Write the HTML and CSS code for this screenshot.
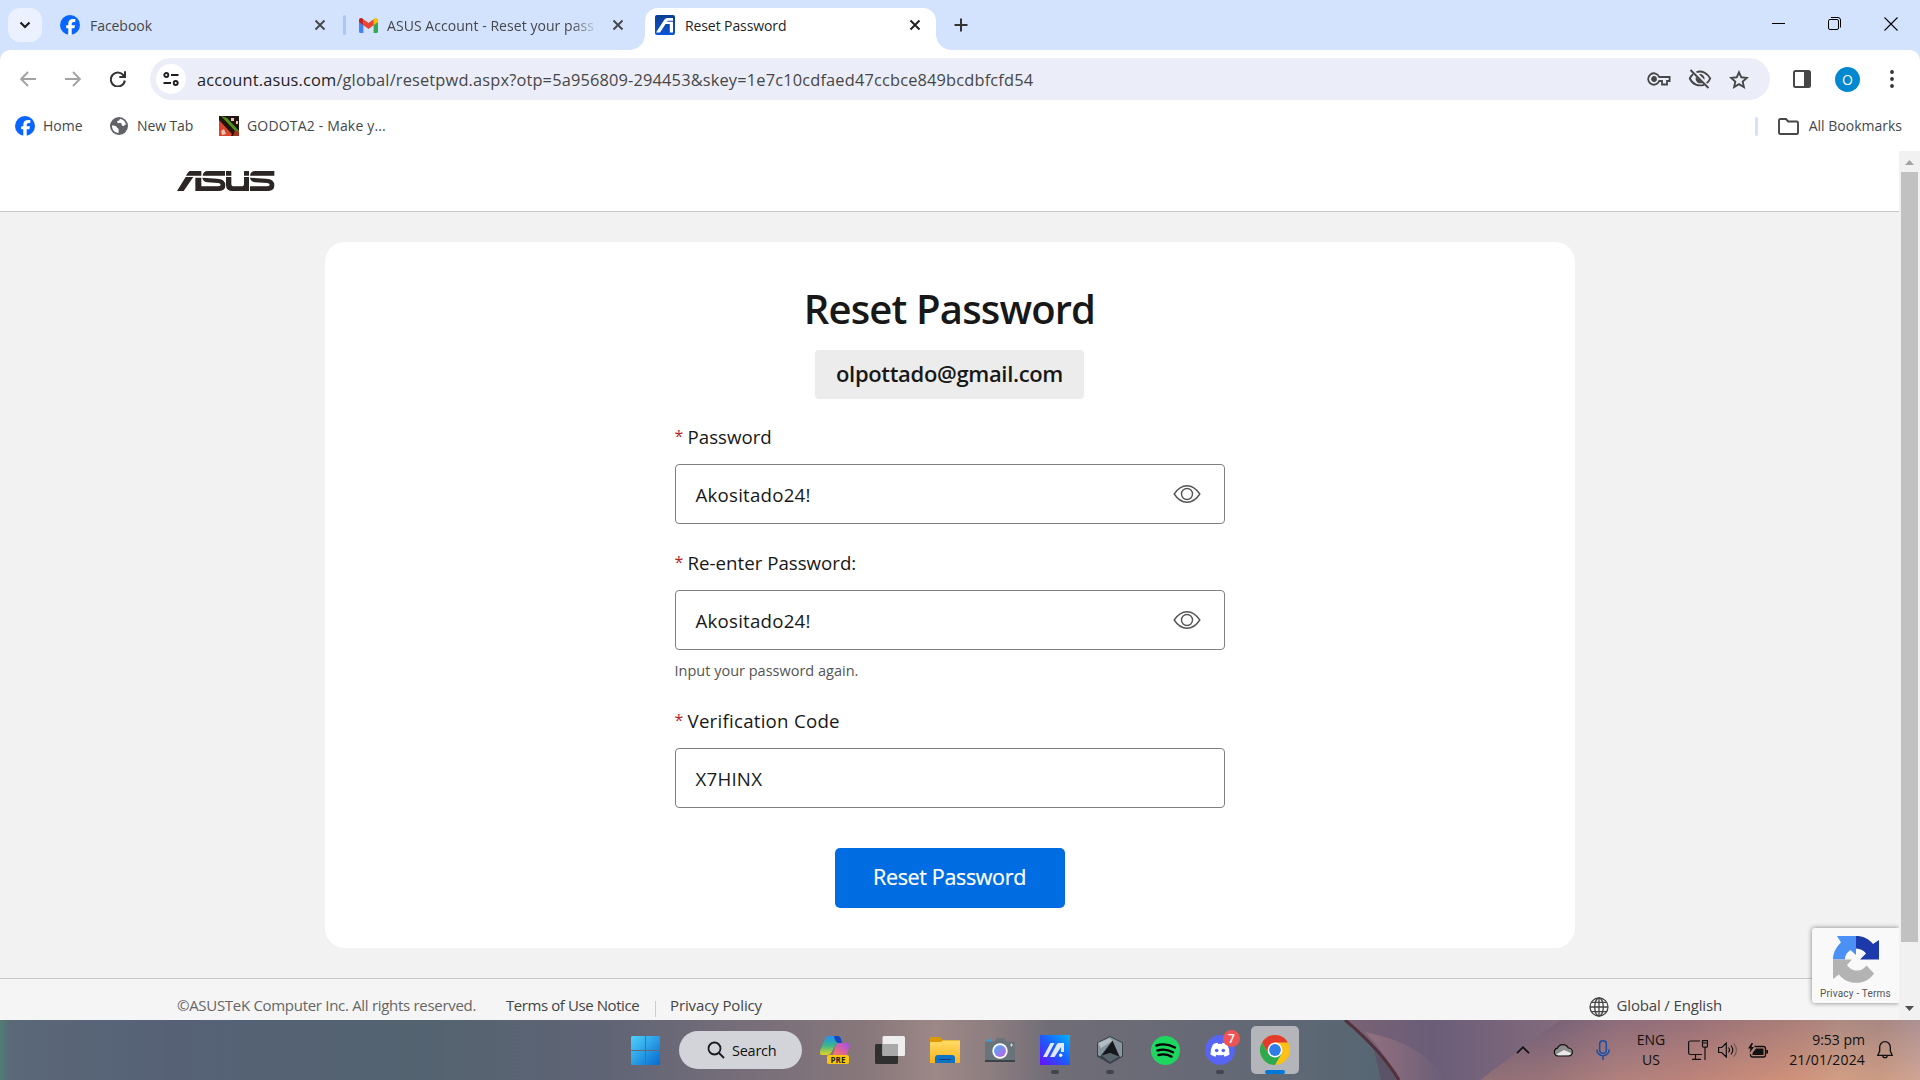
FILE: index.html
```html
<!DOCTYPE html>
<html lang="en">
<head>
<meta charset="utf-8">
<title>Reset Password</title>
<link rel="stylesheet" href="styles.css">
</head>
<body>
<svg width="0" height="0" class="defs" aria-hidden="true">
  <defs>
    <symbol id="fb" viewBox="0 0 20 20"><circle cx="10" cy="10" r="10" fill="#0866ff"/><path d="M8.3 19.9v-6.7H6.2v-3h2.1V8.9c0-3.4 1.5-5 4.9-5 .6 0 1.700.1 2.100.2v2.800h-1.300c-1.700 0-2.300.7-2.300 2.300v1h3.300l-.6 3h-2.700v6.700a10 10 0 0 1-3.400 0z" fill="#fff"/></symbol>
    <symbol id="x" viewBox="0 0 12 12"><path d="M1.500 1.500l9 9M10.500 1.500l-9 9" fill="none" stroke="currentColor" stroke-width="1.900"/></symbol>
    <symbol id="eye" viewBox="0 0 28 20"><path d="M1.200 10C4.500 5 9 1.700 14 1.700S23.500 5 26.800 10C23.500 15 19 18.300 14 18.300S4.500 15 1.200 10z" fill="none" stroke="#555" stroke-width="1.400"/><circle cx="14" cy="10" r="5.500" fill="none" stroke="#555" stroke-width="1.400"/></symbol>
    <linearGradient id="gwin" x1="0" y1="0" x2="1" y2="1"><stop offset="0" stop-color="#4fd2fb"/><stop offset="1" stop-color="#0669cf"/></linearGradient>
    <linearGradient id="gcop" x1="0" y1="0" x2="0" y2="1"><stop offset="0" stop-color="#2193f5"/><stop offset=".5" stop-color="#38b58c"/><stop offset="1" stop-color="#e8d420"/></linearGradient>
    <linearGradient id="gcop2" x1="1" y1="0" x2="0" y2="1"><stop offset="0" stop-color="#a44bf0"/><stop offset="1" stop-color="#ff7a5c"/></linearGradient>
    <linearGradient id="gfold" x1="0" y1="0" x2="0" y2="1"><stop offset="0" stop-color="#ffdb66"/><stop offset="1" stop-color="#fbb41c"/></linearGradient>
    <linearGradient id="glens" x1="0" y1="0" x2="1" y2="1"><stop offset="0" stop-color="#48b4f2"/><stop offset="1" stop-color="#c65ae6"/></linearGradient>
    <linearGradient id="gmy" x1="0" y1="1" x2="1" y2="0"><stop offset="0" stop-color="#6a10ff"/><stop offset=".5" stop-color="#1c5bff"/><stop offset="1" stop-color="#00b4ff"/></linearGradient>
    <linearGradient id="gasus" x1="0" y1="0" x2="0" y2="1"><stop offset="0" stop-color="#0b3d91"/><stop offset="1" stop-color="#0a55d8"/></linearGradient>
  </defs>
</svg>

<header class="tabstrip">
  <div class="tab-search"><svg width="12" height="8" viewBox="0 0 12 8"><path d="M1.500 1.500L6 6l4.500-4.500" fill="none" stroke="#1f1f1f" stroke-width="2.200"/></svg></div>
  <div class="tab">
    <svg class="fav" width="20" height="20"><use href="#fb"/></svg>
    <span class="tab-title">Facebook</span>
    <svg class="tab-x" width="12" height="12"><use href="#x"/></svg>
  </div>
  <div class="tab tab-mail">
    <svg class="fav mail" width="19" height="15" viewBox="0 0 19 15"><path d="M0 2v11.500c0 .8.6 1.500 1.400 1.500h3V6.500z" fill="#4285f4"/><path d="M19 2v11.500c0 .8-.6 1.500-1.400 1.500h-3V6.500z" fill="#34a853"/><path d="M14.600 1.200v6L19 4V2c0-1.900-2-2.500-3.400-1.500z" fill="#fbbc04"/><path d="M4.400 7.200v-6l5.100 3.900 5.100-3.900v6l-5.100 3.900z" fill="#ea4335"/><path d="M0 2v2l4.400 3.200v-6L3.400.5C1.900-.5 0 .2 0 2z" fill="#c5221f"/></svg>
    <span class="tab-title fade">ASUS Account - Reset your pass</span>
    <svg class="tab-x" width="12" height="12"><use href="#x"/></svg>
  </div>
  <div class="tab tab-active">
    <svg class="fav" width="20" height="20" viewBox="0 0 20 20"><rect width="20" height="20" rx="2" fill="url(#gasus)"/><path d="M1 17.500L9.500 4.500Q10.500 3 12 3H18v2.800h-5.300L5 17.500zM11.500 6.800H18v10.700h-3.200V9H10z" fill="#fff"/></svg>
    <span class="tab-title">Reset Password</span>
    <svg class="tab-x" width="12" height="12"><use href="#x"/></svg>
  </div>
  <svg class="new-tab" width="14" height="14" viewBox="0 0 14 14"><path d="M7 .5v13M.5 7h13" stroke="#333" stroke-width="2"/></svg>
  <div class="win-controls">
    <svg width="13" height="13" viewBox="0 0 13 13"><path d="M0 6.500h13" stroke="#000" stroke-width="1"/></svg>
    <svg width="13" height="13" viewBox="0 0 13 13" fill="none" stroke="#000"><rect x=".5" y="2.500" width="10" height="10" rx="1.500"/><path d="M3 .5h7a2.500 2.500 0 0 1 2.500 2.500v7.500"/></svg>
    <svg width="14" height="14" viewBox="0 0 14 14"><path d="M.5.500l13 13M13.500.5l-13 13" stroke="#000" stroke-width="1.100"/></svg>
  </div>
</header>

<div class="chrome">
  <div class="toolbar">
    <div class="nav">
      <svg width="16" height="16" viewBox="0 0 16 16" fill="none" stroke="#a3a3a3" stroke-width="1.900"><path d="M16 8H1.500M8 1L1.200 8 8 15"/></svg>
      <svg width="16" height="16" viewBox="0 0 16 16" fill="none" stroke="#a3a3a3" stroke-width="1.900"><path d="M0 8h14.500M8 1l6.800 7L8 15"/></svg>
      <svg width="16" height="16" viewBox="0 0 16 16" fill="none" stroke="#333" stroke-width="2"><path d="M14 5.200A7 7 0 1 0 14.800 9.500M15 .3v5.600H9.300"/></svg>
    </div>
    <div class="omnibox">
      <span class="site-info"><svg width="16" height="14" viewBox="0 0 16 14" fill="none" stroke="#1f1f1f" stroke-width="1.900"><circle cx="3.300" cy="3" r="2"/><path d="M8 3h7.500M.5 11H8"/><circle cx="12.700" cy="11" r="2"/></svg></span>
      <span class="url"><b>account.asus.com</b>/global/resetpwd.aspx?otp=5a956809-294453&amp;skey=1e7c10cdfaed47ccbce849bcdbfcfd54</span>
      <div class="omni-icons">
        <svg width="24" height="14" viewBox="0 0 24 14" fill="none" stroke="#474747" stroke-width="1.800"><path d="M12.200 5A5.700 5.700 0 1 0 12.200 9H15v3.500h5V9h2.600V5z"/><circle cx="7" cy="7" r="2" fill="#474747"/></svg>
        <svg width="24" height="20" viewBox="0 0 24 20" fill="none" stroke="#474747" stroke-width="1.900"><path d="M8.500 3.100C14 1.300 19.500 4 22.200 9.500c-.8 1.900-2 3.400-3.600 4.500M16 15.800C10.500 17.500 4.500 15.500 1.800 9.500 2.600 7.700 3.600 6.300 5 5.200M2.500 1l18 18"/><path d="M8 8a4.600 4.600 0 0 0 6.500 5.700zM11 5.200a4.600 4.600 0 0 1 5.500 5.500z" fill="#474747" stroke="none"/></svg>
        <svg width="20" height="19" viewBox="0 0 20 19"><path d="M10 2.300l2.300 5 5.500.6-4.100 3.700 1.200 5.400L10 14.200 5.100 17l1.200-5.400-4.100-3.700 5.500-.6z" fill="none" stroke="#474747" stroke-width="1.900"/></svg>
      </div>
    </div>
    <div class="tool-icons">
      <svg width="18" height="18" viewBox="0 0 18 18"><rect x="1" y="1" width="16" height="16" rx="1.500" fill="none" stroke="#474747" stroke-width="2"/><path d="M11 1h6v16h-6z" fill="#474747"/></svg>
      <span class="avatar">O</span>
      <svg width="4" height="18" viewBox="0 0 4 18" fill="#333"><circle cx="2" cy="2" r="1.900"/><circle cx="2" cy="9" r="1.900"/><circle cx="2" cy="16" r="1.900"/></svg>
    </div>
  </div>
  <nav class="bookmarks">
    <a class="bm bm-home"><svg width="20" height="20"><use href="#fb"/></svg><span>Home</span></a>
    <a class="bm bm-new"><svg width="18" height="18" viewBox="0 0 18 18"><circle cx="9" cy="9" r="9" fill="#5f6368"/><path d="M2 8.500c2.500 0 4.500.5 5 2 .3 1 1.800.7 1.700 2.200L8.500 16C4.500 15.800 1.800 12.500 2 8.500zM9.500 2.100c.8 1-.7 1.700-2 1.900-1 .3-.2 1.500.5 2 1.200.7 2-.6 3.200.3 1 .9 0 2.400 1.700 2.700 1.500.3 1.200-1.500 3-1.200-.2-3.200-3-5.700-6.400-5.700z" fill="#fff"/></svg><span>New Tab</span></a>
    <a class="bm bm-dota"><svg width="20" height="20" viewBox="0 0 20 20"><rect width="20" height="20" fill="#20140f"/><path d="M0 4l13 14-1 2H0z" fill="#d8452b"/><path d="M2 0l6 2 12 13v4z" fill="#559321"/><path d="M12 2h3v3h-3zM17 5h2v3h-2zM2 15l3-2 2 5-4 1z" fill="#e8c3b5"/><path d="M16 14l4 2v4h-6z" fill="#a5321f"/></svg><span>GODOTA2 - Make y...</span></a>
    <span class="bm-sep"></span>
    <a class="bm bm-all"><svg width="21" height="17" viewBox="0 0 21 17"><path d="M1 2.500C1 1.700 1.500 1 2.300 1H8l2.200 2.500h8.500c.8 0 1.300.6 1.300 1.300v9.900c0 .7-.5 1.300-1.300 1.300H2.300C1.500 16 1 15.400 1 14.700z" fill="none" stroke="#474747" stroke-width="1.900"/></svg><span>All Bookmarks</span></a>
  </nav>
</div>

<div class="viewport">
  <main class="page">
    <div class="site-head">
      <svg class="logo" width="98" height="20" viewBox="111 63 294 60" fill="#2b2523"><path d="M149 63h35v14h-46q6-12 11-14zM137 81h23l-29 42h-20z"/><path d="M166 83h18v26h50q8 0 8-5t-8-5l-31-2q-14-1-16-14l44 3q25 1 25 20 0 17-18 17h-72z"/><path d="M255 63v14h-67q2-14 15-14zM258 63h16v14h-16zM258 81h16v20q0 8 8 8h22q8 0 8-8V81h15v42h-49q-20 0-20-18zM312 63h15v14h-15z"/><path d="M403 63v14h-73q2-14 15-14zM330 83l48 3q25 1 25 20 0 17-18 17h-55v-14h51q8 0 8-5t-8-5l-34-2q-15-1-17-14z"/></svg>
    </div>
    <div class="body">
      <section class="card">
        <h1>Reset Password</h1>
        <div class="email">olpottado@gmail.com</div>
        <form class="form">
          <label class="lbl"><i>*</i><span>Password</span></label>
          <div class="field"><span>Akositado24!</span><svg width="28" height="20"><use href="#eye"/></svg></div>
          <label class="lbl next"><i>*</i><span>Re-enter Password:</span></label>
          <div class="field"><span>Akositado24!</span><svg width="28" height="20"><use href="#eye"/></svg></div>
          <p class="help">Input your password again.</p>
          <label class="lbl next"><i>*</i><span class="code-label">Verification Code</span></label>
          <div class="field"><span>X7HINX</span></div>
        </form>
        <div class="submit">Reset Password</div>
      </section>
    </div>
    <footer class="site-foot">
      <span class="copy">©ASUSTeK Computer Inc. All rights reserved.</span>
      <span class="terms">Terms of Use Notice</span>
      <span class="foot-sep"></span>
      <span class="priv">Privacy Policy</span>
      <span class="locale"><svg width="20" height="20" viewBox="0 0 20 20" fill="none" stroke="#444" stroke-width="1.300"><circle cx="10" cy="10" r="9"/><ellipse cx="10" cy="10" rx="4.300" ry="9"/><path d="M10 1v18M1 10h18M2.500 5.300h15M2.500 14.700h15"/></svg><span>Global / English</span></span>
    </footer>
    <aside class="recaptcha">
      <svg width="46" height="47" viewBox="0 0 46 47"><path d="M46 4v19.500H27l6-6c-2-3-5.500-4.700-10-5V0c7 0 12.500 2.500 17 8z" fill="#1c3aa9"/><path d="M4 0h19v19l-5.500-5C14 16.500 12 19 12 23.500H0C0 17 3 11 8 6.500z" fill="#4a90f5"/><path d="M0 43V23.500h19l-5 5.500c3 4 6 5.500 10 5.500 4.500 0 7-2 9.500-5l7.500 8c-4 6-10 9.300-18 9.300-7 0-13-3-17-8.300z" fill="#b3b3b3"/></svg>
      <span>Privacy - Terms</span>
    </aside>
  </main>
  <div class="scrollbar">
    <svg width="9" height="5" viewBox="0 0 9 5"><path d="M4.500 0L9 5H0z" fill="#a3a3a3"/></svg>
    <div class="thumb"></div>
    <svg width="9" height="5" viewBox="0 0 9 5"><path d="M0 0h9L4.500 5z" fill="#505050"/></svg>
  </div>
</div>

<footer class="taskbar">
  <svg class="wallpaper" viewBox="0 0 1920 60" preserveAspectRatio="none">
    <defs>
      <linearGradient id="w1"><stop offset="0" stop-color="#4f7d72"/><stop offset=".007" stop-color="#5b6878"/><stop offset=".12" stop-color="#566176"/><stop offset=".28" stop-color="#536370"/><stop offset=".42" stop-color="#5f6475"/><stop offset=".5" stop-color="#736c79"/><stop offset=".6" stop-color="#87777b"/><stop offset=".65" stop-color="#9c8886"/><stop offset=".69" stop-color="#8c7d80"/><stop offset=".73" stop-color="#706d76"/><stop offset=".83" stop-color="#676a76"/><stop offset="1" stop-color="#506571"/></linearGradient>
      <linearGradient id="w2"><stop offset="0" stop-color="#796273"/><stop offset=".15" stop-color="#6b5d78"/><stop offset=".35" stop-color="#80697c"/><stop offset=".47" stop-color="#a07a82"/><stop offset=".6" stop-color="#b27f7e"/><stop offset=".78" stop-color="#cc937e"/><stop offset=".86" stop-color="#d0a48c"/><stop offset=".93" stop-color="#c8a08a"/><stop offset="1" stop-color="#cfafa5"/></linearGradient>
      <linearGradient id="w3" x1="0" y1="0" x2="0" y2="1"><stop offset="0" stop-color="#5c4d6c" stop-opacity=".3"/><stop offset="1" stop-color="#d58e70" stop-opacity=".3"/></linearGradient>
      <linearGradient id="w4"><stop offset="0" stop-color="#a57c86" stop-opacity=".6"/><stop offset="1" stop-color="#a57c86" stop-opacity="0"/></linearGradient>
    </defs>
    <rect width="1440" height="60" fill="url(#w1)"/>
    <path d="M1345 0h575v60h-521q-18-26-54-60z" fill="url(#w2)"/>
    <path d="M1560 0h360v60h-440z" fill="url(#w3)"/>
    <path d="M1365 12q60 12 80 48h-46q-14-28-34-48z" fill="url(#w4)"/>
    <path d="M1374 30l7 30h18q-12-18-25-30z" fill="#5b5467"/>
    <path d="M1345 0q36 30 54 60" fill="none" stroke="#52313c" stroke-width="3"/>
  </svg>
  <div class="apps">
    <div class="app"><svg width="29" height="29" viewBox="0 0 29 29" fill="url(#gwin)"><path d="M0 1.500Q0 0 1.500 0H14v14H0zM15 0h12.500Q29 0 29 1.500V14H15zM0 15h14v14H1.500Q0 29 0 27.500zM15 15h14v12.500q0 1.500-1.500 1.500H15z"/></svg></div>
    <div class="search"><svg width="18" height="18" viewBox="0 0 18 18" fill="none" stroke="#1c1c1c" stroke-width="1.800"><circle cx="7.500" cy="7.500" r="6"/><path d="M12 12l5 5"/></svg><span>Search</span></div>
    <div class="app"><svg width="30" height="29" viewBox="0 0 30 29"><path d="M5 3q1-3 4-3h9q2 0 3 4l1 4h-6l-5 9q-1 2-4 2H2q-3 0-2-4z" fill="url(#gcop)"/><path d="M14 0h4q3 0 4 7h-4q-3-1-4-7z" fill="#1547c0"/><path d="M15 12q1-5 5-5h6q4 0 3 4l-2 8H13z" fill="url(#gcop2)"/><rect x="7" y="19" width="22" height="9" rx="2" fill="#fdc60b"/><text x="18" y="26.500" class="pre">PRE</text></svg></div>
    <div class="app"><svg width="30" height="28" viewBox="0 0 30 28"><rect y="8" width="23" height="20" rx="1.500" fill="#303030"/><rect x="7.500" width="22.500" height="20" rx="1.500" fill="#eee"/><path d="M7.500 8H23v12H7.500z" fill="#a9a9a9"/></svg></div>
    <div class="app"><svg width="30" height="26" viewBox="0 0 30 26"><path d="M0 1.500Q0 0 1.500 0H10l3 3h15q2 0 2 2v5H0z" fill="#dd9a06"/><path d="M0 5h11l2-1.500h17V26H0z" fill="url(#gfold)"/><path d="M5 21q0-3 3-3h14q3 0 3 3v5H5z" fill="#0e73c4"/><path d="M9 22.500h12" stroke="#07457f" stroke-width="1"/></svg></div>
    <div class="app"><svg width="30" height="24" viewBox="0 0 30 24"><path d="M0 5q0-1.500 1.500-1.500h8L12 0h7l2.500 3.500h7Q30 3.500 30 5v17H0z" fill="#69737a"/><path d="M0 22h30v2H0z" fill="#3b4349"/><path d="M2 1.500h5v2H2z" fill="#21a6ee"/><circle cx="15" cy="13" r="7.700" fill="#fff"/><circle cx="15" cy="13" r="6" fill="url(#glens)"/><path d="M26.500 5.500v3M25 7h3" stroke="#d5dadd"/></svg></div>
    <div class="app run"><svg width="30" height="30" viewBox="0 0 30 30"><rect width="30" height="30" fill="url(#gmy)"/><path d="M3 22L10.500 8h4L7 22zM10 22l7-13q.6-1 2-1h5v9h-3v-5L14.500 22z" fill="#dfe9ff"/><circle cx="20.700" cy="20.200" r="1.700" fill="#fff"/></svg></div>
    <div class="app run"><svg width="26" height="28" viewBox="0 0 26 28"><path d="M13 0l13 6.500v14L13 28 0 20.500v-14z" fill="#39424b"/><path d="M13 1L25 7v13l-2 1L15.500 4.500 3 20.500 1 19V7z" fill="#8996a0"/><path d="M15.500 5l6.500 15.500-9-3.500-8 2.500z" fill="#14181d"/><path d="M5 19.500l8-2.500 9 3.500L13 26z" fill="#5a646d"/><path d="M1 7l12-5 2 3L4 12z" fill="#b4bdc3"/></svg></div>
    <div class="app"><svg width="29" height="29" viewBox="0 0 29 29"><circle cx="14.500" cy="14.500" r="14.500" fill="#1ed760"/><path d="M5.500 9.500q9-3 18.500 2M6.500 14.500q8-2.400 15.500 1.800M7.500 19q7-1.800 13 1.600" fill="none" stroke="#000" stroke-width="2.400" stroke-linecap="round"/></svg></div>
    <div class="app run"><svg width="30" height="30" viewBox="0 0 30 30"><circle cx="15" cy="15" r="15" fill="#5865f2"/><path d="M8 9.500q2-1.400 4.500-1.700l.6 1.200q2-.3 3.900 0l.6-1.200q2.500.3 4.500 1.700 2.800 4.500 2.400 10-2.300 1.600-4.900 2.200l-1.100-1.900q-3.500 1-7 0l-1.100 1.900q-2.600-.6-4.900-2.200-.3-5.500 2.500-10z" fill="#fff"/><circle cx="11.700" cy="15.500" r="1.800" fill="#5865f2"/><circle cx="18.300" cy="15.500" r="1.800" fill="#5865f2"/></svg><b class="badge">7</b></div>
    <div class="app current"><svg width="30" height="30" viewBox="0 0 30 30"><circle cx="15" cy="15" r="15" fill="#fbc116"/><path d="M2 7.500A15 15 0 0 1 28 7.500H15L8.500 18.700z" fill="#e33b2e"/><path d="M2 7.500A15 15 0 0 0 15 30l6.500-11.200L15 20 8.500 18.700z" fill="#2da94f"/><circle cx="15" cy="15" r="7.400" fill="#fff"/><circle cx="15" cy="15" r="5.900" fill="#2f7de9"/></svg></div>
  </div>
  <div class="tray">
    <svg width="14" height="8" viewBox="0 0 14 8" fill="none" stroke="#111" stroke-width="1.700"><path d="M1 7.200l6-6 6 6"/></svg>
    <svg class="cloud" width="20" height="14" viewBox="0 0 20 14"><path d="M5 13a4 4 0 0 1-.5-7.900A6 6 0 0 1 15.300 5a4 4 0 0 1 .2 8z" fill="#8d8d8d"/><path d="M3 11.500L11 7l7 3-1 2.500-11 .5z" fill="#e8e8e8"/><path d="M5 13a4 4 0 0 1-.5-7.900A6 6 0 0 1 15.300 5a4 4 0 0 1 .2 8z" fill="none" stroke="#111" stroke-width="1.200"/></svg>
    <svg class="mic" width="14" height="20" viewBox="0 0 14 20" fill="none" stroke="#174ea6" stroke-width="1.500"><rect x="3.700" y=".8" width="6.600" height="12.500" rx="3.300"/><path d="M.8 9.500a6.200 6.200 0 0 0 12.400 0M7 16v4"/></svg>
    <div class="lang"><span>ENG</span><span>US</span></div>
    <svg class="net" width="20" height="20" viewBox="0 0 20 20" fill="none" stroke="#111" stroke-width="1.200"><path d="M12 1H2.500Q.6 1 .6 2.500V13q0 1.500 1.900 1.500H14M7.500 14.500V19M4 19.300h9"/><path d="M14.500.6h5v5.500q0 1-1 1h-3q-1 0-1-1zM14.500 3h5M17 7v13"/></svg>
    <svg class="vol" width="20" height="16" viewBox="0 0 20 16" fill="none" stroke="#111" stroke-width="1.200"><path d="M.6 5.500h3.200L8.300 1v14l-4.500-4.500H.6zM10.500 5.500q2 2.500 0 5M13 3.500q3.500 4.500 0 9"/><path d="M15.700 1.300q5.500 6.700 0 13.400" opacity=".35"/></svg>
    <svg class="bat" width="20" height="15" viewBox="0 0 20 15"><path d="M6.500 3.500h9q2 0 2 2v6.500q0 2-2 2h-11q-2 0-2-2v-1" fill="none" stroke="#111" stroke-width="1.300"/><path d="M8 5.500h7.500v6.500H4.500V10zM18.200 7h1.800v3.500h-1.800zM3.500 0L0 5.500h2.500L1.500 10 6 4H3.500L5 0z" fill="#111"/></svg>
    <div class="clock"><span>9:53 pm</span><span class="date">21/01/2024</span></div>
    <svg class="bell" width="16" height="18" viewBox="0 0 16 18" fill="none" stroke="#111" stroke-width="1.300"><path d="M8 .7a5.300 5.300 0 0 0-5.300 5.300v4L.8 14.300h14.400L13.300 10V6A5.300 5.300 0 0 0 8 .7zM5.800 14.500a2.200 2.200 0 0 0 4.400 0"/></svg>
  </div>
</footer>
</body>
</html>
```
FILE: styles.css
```css
* { box-sizing: border-box; }
body {
  margin: 0; width: 1920px; height: 1080px; overflow: hidden;
  display: flex; flex-direction: column;
  font-family: "Open Sans", "Noto Sans", sans-serif; color: #181818; background: #d3e3fd;
  white-space: nowrap;
}
svg { display: block; flex: none; }
.defs { position: absolute; }

/* tab strip */
.tabstrip { height: 50px; flex: none; display: flex; padding-left: 8px; align-items: flex-end; font-size: 14px; color: #45474a; }
.tab-search { width: 34px; height: 34px; margin-bottom: 8px; border-radius: 12px; background: #ebf1fe; display: grid; place-items: center; }
.tab { height: 42px; width: 303px; display: flex; align-items: center; padding: 0 19px 8px 18px; color: #45474a; }
.tab .fav { margin-right: 10px; }
.tab-title { flex: 1; letter-spacing: -.05px; }
.tab-mail { width: 300px; padding: 0 21px 8px 14px; position: relative; }
.tab-mail::before { content: ""; position: absolute; left: -2px; top: 7px; width: 3px; height: 20px; border-radius: 2px; background: #a8c7fa; }
.tab-mail .mail { margin-right: 9px; }
.fade { margin-right: 13px; letter-spacing: .05px; -webkit-mask-image: linear-gradient(90deg, #000 87%, transparent); mask-image: linear-gradient(90deg, #000 87%, transparent); }
.tab-active { width: 291px; padding: 0 15px 8px 10px; background: #fff; border-radius: 13px 13px 0 0; position: relative; color: #1f1f1f; }
.tab-active .tab-title { letter-spacing: -.1px; }
.tab-active::before, .tab-active::after { content: ""; position: absolute; bottom: 0; width: 15px; height: 15px; }
.tab-active::before { left: -15px; background: radial-gradient(circle at 0 0, transparent 14.500px, #fff 15px); }
.tab-active::after { right: -15px; background: radial-gradient(circle at 100% 0, transparent 14.500px, #fff 15px); }
.new-tab { margin: 0 0 18px 18px; }
.win-controls { margin-left: auto; display: flex; gap: 43px; padding: 0 22px 19px 0; }

/* toolbar */
.chrome { height: 101px; flex: none; background: #fff; border-radius: 10px 10px 0 0; }
.toolbar { height: 58px; display: flex; align-items: center; padding: 0 26px 0 20px; }
.nav { display: flex; gap: 29px; width: 130px; }
.omnibox { width: 1620px; height: 42px; border-radius: 21px; background: #ebeef8; display: flex; align-items: center; padding: 0 21px 0 6px; }
.site-info { width: 30px; height: 30px; border-radius: 50%; background: #fff; display: grid; place-items: center; }
.url { margin-left: 11px; font-size: 16.400px; letter-spacing: .155px; color: #474747; }
.url b { font-weight: 400; color: #1f1f1f; }
.omni-icons { margin-left: auto; display: flex; align-items: center; gap: 17px; }
.tool-icons { margin-left: auto; display: flex; align-items: center; }
.avatar { width: 25px; height: 25px; border-radius: 50%; background: #0288d1; color: #fff; font-size: 14px; display: grid; place-items: center; margin: 0 30px 0 24px; }

.bookmarks { height: 36px; display: flex; align-items: center; padding: 0 18px 0 15px; font-size: 14px; color: #45474a; }
.bm { display: flex; align-items: center; }
.bm span { margin-top: -2px; }
.bm-home { gap: 8px; width: 95px; }
.bm-new { gap: 9px; width: 109px; letter-spacing: -.1px; }
.bm-dota { gap: 8px; letter-spacing: .17px; }
.bm-all { gap: 10px; }
.bm-sep { width: 3px; height: 19px; margin: 0 20px 0 auto; background: #d3e3fd; border-radius: 2px; }

/* web page */
.viewport { height: 869px; flex: none; display: flex; }
.page { flex: 1; position: relative; overflow: hidden; background: #f2f2f2; }
.site-head { height: 61px; background: #fff; border-bottom: 1px solid #c9c9c9; padding: 20px 0 0 177px; }
.body { padding: 30px 0; }
.card { width: 1250px; height: 706px; margin: 0 auto; background: #fff; border-radius: 20px; padding-top: 36px; display: flex; flex-direction: column; align-items: center; }
.card h1 { margin: 0 0 11px; font-size: 40px; line-height: 61px; font-weight: 600; letter-spacing: -.85px; }
.email { height: 49px; width: 269px; background: #ececec; border-radius: 4px; text-align: center; line-height: 47px; font-size: 22px; font-weight: 600; letter-spacing: -.33px; margin-bottom: 23px; }
.form { width: 550px; font-size: 18.700px; }
.lbl { display: flex; height: 28px; line-height: 29px; margin-bottom: 14px; }
.lbl i { width: 13px; font-style: normal; color: #b3261e; font-size: 16px; }
.lbl.next { margin-top: 24px; }
.code-label { letter-spacing: .24px; }
.field { height: 60px; border: 1px solid #808080; border-radius: 4px; padding: 0 23px 0 20px; display: flex; justify-content: space-between; align-items: center; letter-spacing: .22px; }
.help { margin: 8px 0 0; height: 24px; line-height: 26px; font-size: 14.500px; color: #545454; }
.submit { margin-top: 40px; width: 230px; height: 60px; border-radius: 5px; background: #006ce1; color: #fff; font-size: 21.500px; letter-spacing: -.35px; text-align: center; line-height: 58px; -webkit-text-stroke: .2px #fff; }
.site-foot { height: 60px; background: #f5f5f5; border-top: 1px solid #c9c9c9; padding: 13px 177px 0; display: flex; font-size: 15px; line-height: 26px; color: #444; }
.copy { color: #666; width: 329px; letter-spacing: -.3px; }
.terms { width: 149px; letter-spacing: -.42px; }
.priv { letter-spacing: -.12px; }
.foot-sep { width: 1px; height: 16px; background: #ccc; margin: 9px 14px 0 0; }
.locale { margin-left: auto; display: flex; gap: 7px; letter-spacing: -.15px; }
.locale svg { margin-top: 5px; }
.recaptcha { position: absolute; right: 0; top: 777px; width: 87px; height: 75px; background: #f9f9f9; border-radius: 3px 0 0 3px; box-shadow: 0 0 5px #808080; display: flex; flex-direction: column; align-items: center; padding-top: 8px; font: 10px/12px Roboto, sans-serif; letter-spacing: .2px; color: #555; gap: 5px; }
.scrollbar { width: 21px; background: #f1f1f1; display: flex; flex-direction: column; align-items: center; padding: 9px 0; }
.thumb { width: 17px; height: 770px; background: #c1c1c1; margin: 7px 0 auto; }

/* taskbar */
.taskbar { height: 60px; position: relative; display: flex; padding-left: 621px; color: #111; }
.wallpaper { position: absolute; inset: 0; width: 100%; height: 100%; }
.apps { position: relative; display: flex; align-items: center; gap: 7px; }
.app { width: 48px; height: 48px; border-radius: 5px; display: grid; place-items: center; position: relative; }
.search { width: 123px; height: 38px; border-radius: 19px; background: #d3d4d9; margin: 0 2px 0 3px; display: flex; align-items: center; gap: 7px; padding-left: 28px; font-size: 14.500px; letter-spacing: -.25px; }
.run::after, .current::after { content: ""; position: absolute; bottom: 0; left: 20px; width: 8px; height: 4px; border-radius: 2px; background: #43454e; }
.current { background: #b3b5bb; }
.current::after { left: 14px; width: 20px; background: #0078d4; }
.badge { position: absolute; right: 4px; top: 4px; width: 17px; height: 17px; border-radius: 50%; background: #ee5455; color: #fff; font-size: 12px; line-height: 17px; text-align: center; font-weight: 600; }
.pre { font: 700 8px "Open Sans", sans-serif; text-anchor: middle; fill: #222; }
.tray { position: relative; margin-left: auto; padding-right: 27px; display: flex; align-items: center; font-size: 14px; line-height: 20px; }
.cloud { margin-left: 23px; }
.mic { margin-left: 23px; }
.lang { width: 40px; margin-left: 21px; text-align: center; display: flex; flex-direction: column; }
.net { margin-left: 17px; }
.vol { margin-left: 10px; }
.bat { margin-left: 10px; }
.clock { width: 80px; margin-left: 17px; display: flex; flex-direction: column; text-align: right; }
.date { letter-spacing: .15px; }
.bell { margin-left: 12px; }
```
